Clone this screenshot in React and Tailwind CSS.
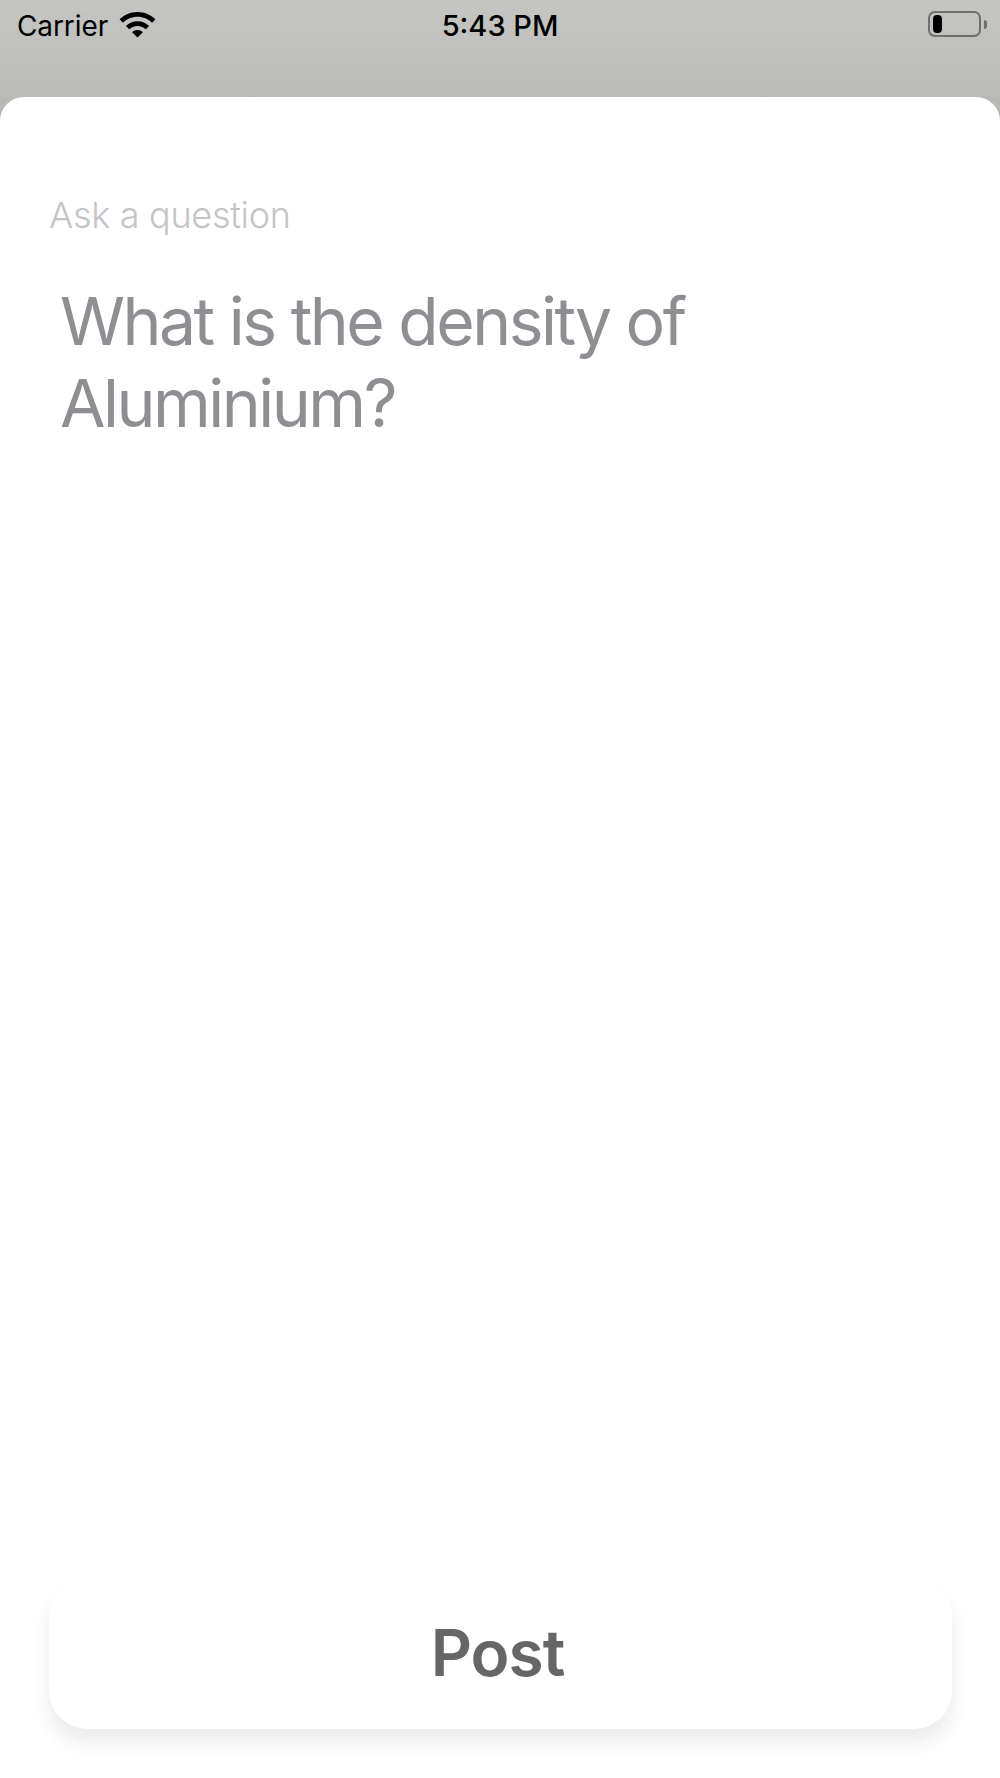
import React from 'react';

const WifiIcon = () => (
    <svg width="37" height="26" viewBox="0 0 37 26" fill="#000">
        <path d="M18.5 0C11.5 0 5.2 2.8 0.6 7.3L3.9 10.7C7.7 7 12.8 4.7 18.5 4.7C24.2 4.7 29.3 7 33.1 10.7L36.4 7.3C31.8 2.8 25.5 0 18.5 0Z" />
        <path d="M18.5 9.2C14 9.2 9.9 11 6.9 13.9L10.2 17.3C12.4 15.2 15.3 13.9 18.5 13.9C21.7 13.9 24.6 15.2 26.8 17.3L30.1 13.9C27.1 11 23 9.2 18.5 9.2Z" />
        <path d="M18.5 18C16.4 18 14.5 18.8 13.1 20.2L18.5 25.6L23.9 20.2C22.5 18.8 20.6 18 18.5 18Z" />
    </svg>
);

const BatteryIcon = () => (
    <div className="flex items-center gap-[3px]">
        <div className="flex h-[26px] w-[53px] items-center rounded-[7px] border-[2px] border-[#6f706e] px-[3px]">
            <div className="h-[18px] w-[9px] rounded-[4px] bg-black"></div>
        </div>
        <div className="h-[9px] w-[3px] rounded-r-full bg-[#6f706e]"></div>
    </div>
);

const App = () => {
    return (
        <div className="flex h-[1778px] w-[1000px] flex-col overflow-hidden bg-[#b8b9b5] font-['Inter',sans-serif]">
            <div className="relative flex h-[97px] shrink-0 items-start justify-between bg-gradient-to-b from-[#c5c6c3] to-[#babbb7] pl-[17px] pr-[13px] pt-[8px] text-black">
                <div className="flex items-center gap-[11px]">
                    <span className="relative top-[1px] text-[28px] leading-[34px] tracking-[-0.1px]">Carrier</span>
                    <WifiIcon />
                </div>
                <span className="absolute left-0 right-0 top-[9px] text-center text-[29px] font-medium leading-[34px]">5:43 PM</span>
                <div className="pt-[3px]">
                    <BatteryIcon />
                </div>
            </div>
            <div className="flex flex-1 flex-col rounded-t-[24px] bg-white pl-[49px] pr-[48px] pt-[96px]">
                <div className="text-[36px] font-light leading-[44px] tracking-[-0.3px] text-[#c4c4c6]">Ask a question</div>
                <div className="mt-[43px] w-[700px] pl-[11px] text-[66px] font-normal leading-[82px] tracking-[-2.5px] text-[#8e8e93]">What is the density of Aluminium?</div>
                <div className="mt-auto mb-[49px] flex h-[152px] items-center justify-center rounded-[38px] bg-white pr-[6px] shadow-[0_14px_18px_rgba(0,0,0,0.08)]">
                    <span className="text-[64px] font-semibold tracking-[-1px] text-[#666666]">Post</span>
                </div>
            </div>
        </div>
    );
};

export default App;
